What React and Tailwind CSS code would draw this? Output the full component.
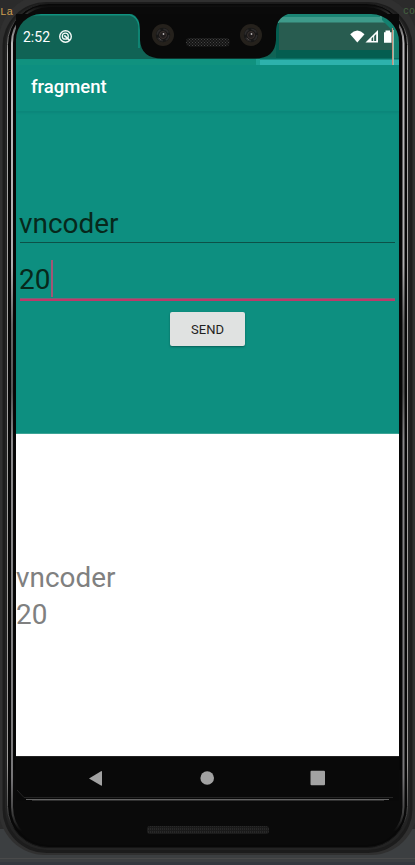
import React from "react";

function PhoneBody() {
  return (
    <svg className="absolute inset-0" width="415" height="865" viewBox="0 0 415 865" aria-hidden="true">
      <defs>
        <linearGradient id="rim" x1="0" y1="0" x2="0" y2="1">
          <stop offset="0" stopColor="#0c0c0c" />
          <stop offset="0.012" stopColor="#3a3a3a" />
          <stop offset="0.045" stopColor="#bdbbbd" />
          <stop offset="0.31" stopColor="#b0afb0" />
          <stop offset="0.38" stopColor="#666" />
          <stop offset="0.46" stopColor="#555" />
          <stop offset="0.52" stopColor="#8a898b" />
          <stop offset="0.92" stopColor="#777678" />
          <stop offset="0.96" stopColor="#444" />
          <stop offset="0.985" stopColor="#0a0a0a" />
        </linearGradient>
        <linearGradient id="rimOuter" x1="0" y1="0" x2="0" y2="1">
          <stop offset="0" stopColor="#1b1b1b" />
          <stop offset="0.02" stopColor="#333" />
          <stop offset="0.06" stopColor="#a9a8a7" />
          <stop offset="0.9" stopColor="#9d9b99" />
          <stop offset="0.96" stopColor="#444" />
          <stop offset="0.98" stopColor="#151515" />
        </linearGradient>
      </defs>
      <rect y="829" width="415" height="36" fill="#3c3f41" />
      <rect y="858" width="415" height="1" fill="#4a4a4a" />
      <rect y="862" width="415" height="3" fill="#34383f" />
      <rect x="-1" y="-5" width="418" height="860" rx="46" fill="#303030" />
      <rect x="2.5" y="2" width="410" height="851" rx="44" fill="#1c1c1c" />
      <rect x="5" y="3" width="405" height="847" rx="42" fill="#232323" />
      <rect x="7.5" y="3.5" width="400" height="844" rx="41" fill="#080808" stroke="url(#rimOuter)" />
      <rect x="12" y="6" width="391.5" height="838" rx="37" fill="#0a0a0a" stroke="url(#rim)" strokeWidth="2" />
      <path d="M14.5 50V770M400.5 50V770" stroke="#050505" strokeWidth="2" />
    </svg>
  );
}

function StatusIcons() {
  return (
    <svg className="absolute inset-0" width="383" height="52" viewBox="16 14 383 52" aria-hidden="true">
      <g fill="none" stroke="#f5faf8">
        <circle cx="65.5" cy="36.5" r="5.8" strokeWidth="1.4" />
        <circle cx="65.3" cy="36.2" r="3" strokeWidth="1.3" />
        <path d="M64.3 35.4l5.4 5" strokeWidth="1.6" />
      </g>
      <path d="M350.2 34.2Q357.3 27 364.5 34.2L357.3 42.4Z" fill="#fff" />
      <path d="M366.9 42L377.4 31.4V42Z" fill="#fff" stroke="#fff" strokeWidth="1.2" />
      <path d="M371.5 38.5L373.2 36.8V41H371.5ZM374.2 36L376.2 34V41H374.2Z" fill="#285c50" />
      <path d="M384 32.2h1.5v-1.7h4.5v1.7h1.5v10.6H384Z" fill="#fff" />
      <path d="M392.5 28V65" stroke="#c98e79" />
      <path d="M393.5 30V65" stroke="#8bc4b5" />
    </svg>
  );
}

function StatusBar() {
  return (
    <header className="relative z-10 flex h-[45px] shrink-0 items-center bg-[#106355] pl-[7px] pt-0.5 text-[14px] text-white">
      <svg className="absolute inset-0" width="383" height="52" viewBox="16 14 383 52" aria-hidden="true">
        <path d="M16 59.5H399V65H16Z" fill="#10927f" />
        <path d="M16 14.8H130Q138 17 139 26V48" stroke="#10917f" strokeWidth="1.4" fill="none" />
        <path d="M260 59H399V65H260Z" fill="#2db2ac" />
        <path d="M256 59H260V65H256Z" fill="#1da294" />
        <path d="M260 58.5H399" stroke="#096f63" strokeWidth="2" />
        <path d="M276 14H399V58H276Z" fill="#045d50" />
        <path d="M276 14H390V23H276Z" fill="#3e9b8b" />
        <path d="M276 14H380V17H276Z" fill="#1b8474" />
        <path d="M279 22.5H392V50H279Z" fill="#285c50" />
        <path d="M382 20L393 31V58H399V14H382Z" fill="#14806f" />
        <path d="M16 14V40A25 26 0 0 1 41 14ZM399 14V42A28 28 0 0 0 371 14Z" fill="#090909" />
        <path d="M132 14Q140 17 140 30V40Q141 58.5 162 58.5H255Q275 58.5 276 40V32Q276 18 288 14Z" fill="#090909" />
      </svg>
      <StatusIcons />
      <time className="relative">2:52</time>
    </header>
  );
}

function Camera({ x, y }) {
  return (
    <g transform={`translate(${x} ${y})`}>
      <circle r="11" fill="#25211c" />
      <circle r="7.2" fill="#171717" />
      <circle r="5.8" fill="none" stroke="#2d2b2b" strokeWidth="1.5" strokeDasharray="6 3" />
      <circle r="3.5" fill="#211e1e" stroke="#38302d" />
      <circle cx="0.5" cy="-1" r="0.9" fill="#b9b5b5" />
      <path d="M-4 3l2 2" stroke="#4a4545" />
    </g>
  );
}

function HardwareDetails() {
  return (
    <svg className="pointer-events-none absolute inset-0 z-20" width="415" height="865" viewBox="0 0 415 865" aria-hidden="true">
      <defs>
        <pattern id="mesh" width="3" height="3" patternUnits="userSpaceOnUse">
          <rect width="3" height="3" fill="#141414" />
          <path d="M0 0h1v1H0zM1.5 1.5h1v1h-1z" fill="#454545" />
        </pattern>
        <pattern id="mouthMesh" width="2" height="3" patternUnits="userSpaceOnUse">
          <rect width="2" height="3" fill="#1b1b1b" />
          <path d="M0 0h1v2H0z" fill="#292929" />
        </pattern>
      </defs>
      <Camera x={163} y={35} />
      <Camera x={251} y={35} />
      <rect x="186" y="38" width="43.5" height="8.5" rx="4" fill="url(#mesh)" />
      <rect x="147" y="826" width="122" height="8" rx="3" fill="url(#mouthMesh)" />
      <path d="M17 790l7 7.5H393" fill="none" stroke="#242424" />
      <path d="M26 799.5H389" stroke="#646464" />
      <path d="M32 800.5H384" stroke="#303030" />
    </svg>
  );
}

function NavBar() {
  return (
    <nav className="flex h-[45px] shrink-0 items-center border-t border-[#222] bg-[#090909] pb-[2px] pl-[72px]">
      <svg width="16" height="17" viewBox="0 0 16 17" aria-label="Back">
        <path d="M1 8.5L13 1.2Q14 0.7 14 1.7V15.2Q14 16 13 15.5Z" fill="#a2a2a2" />
      </svg>
      <svg className="ml-[96px]" width="16" height="16" viewBox="0 0 16 16" aria-label="Home">
        <circle cx="7.2" cy="8" r="6.8" fill="#a2a2a2" />
      </svg>
      <svg className="ml-[94px]" width="16" height="16" viewBox="0 0 16 16" aria-label="Recents">
        <rect x="0.5" y="0.7" width="14.5" height="14.5" rx="1" fill="#a2a2a2" />
      </svg>
    </nav>
  );
}

export default function App() {
  return (
    <div className="relative h-[865px] w-[415px] overflow-hidden bg-[#2b2b2b] font-['Roboto',sans-serif]">
      <PhoneBody />
      <span className="absolute left-0 top-[5px] font-['Liberation_Mono',monospace] text-[11px] leading-[14px] text-[#c99c50]">La</span>
      <span className="absolute left-[403px] top-[5px] font-['Liberation_Mono',monospace] text-[10px] leading-[14px] text-[#456341]">co</span>
      <div className="relative ml-4 flex w-[383px] flex-col pt-[14px]">
        <StatusBar />
        <div className="h-[52px] shrink-0 bg-[#0d8f80] pl-[15px] pt-[15px] text-[18.5px] font-medium leading-[26px] text-white">
          fragment
        </div>
        <main className="flex h-[323px] flex-col bg-[#0d8f80] px-1 shadow-[inset_0_2px_2px_#0c877a,inset_0_-1px_0_#3da496]">
          <div className="mt-[90px] h-[42px] border-b border-[#0c5148] text-[27.9px] leading-[46px] text-[#07281b]"><span className="-ml-px">vncoder</span></div>
          <div className="mt-3 flex h-[46px] items-start border-b-[2px] border-[#be386a] text-[27.9px] text-[#07281b] shadow-[inset_0_-1px_0_#746678]">
            <span className="-ml-px leading-[50px]">20</span>
            <span className="ml-px mt-[5px] h-[37px] w-[2px] bg-[#a15675]" />
          </div>
          <button className="mt-[11px] h-[34px] w-[75px] self-center rounded-[2px] bg-[#e0e2e1] pt-0.5 text-[13px] font-normal text-[#1f2221] shadow-[0_1px_2px_#086057]">SEND</button>
        </main>
        <section className="h-[322px] bg-white pt-[125px] text-[27.9px] leading-[37px] text-[#808080]">
          <p>vncoder</p>
          <p>20</p>
        </section>
        <NavBar />
      </div>
      <HardwareDetails />
    </div>
  );
}
